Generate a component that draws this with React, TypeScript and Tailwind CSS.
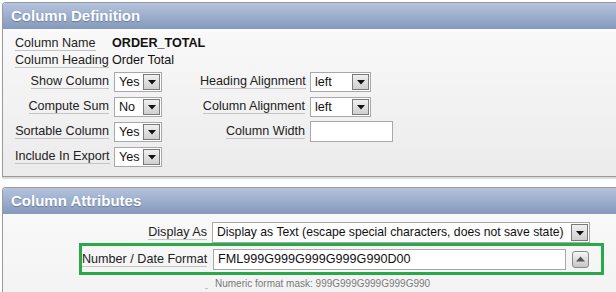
import type { ReactNode } from 'react';

function Label({ children }: { children: ReactNode }) {
    return <span className="border-b border-[#c4c4c4] leading-[15px] text-[#222] whitespace-nowrap">{children}</span>;
}

function Arrow() {
    return (
        <span className="w-[17px] my-[1px] mr-[1px] flex items-center justify-center border border-[#7a7a7a] bg-gradient-to-b from-[#f0f0f0] to-[#cfcfcf]">
            <svg width="8" height="5" viewBox="0 0 8 5" className="mt-[2px]">
                <path d="M0 0 H8 L4 4.5 Z" fill="#111" />
            </svg>
        </span>
    );
}

function Select({ value, width }: { value: string; width: string }) {
    return (
        <div className={`${width} h-[20px] flex items-stretch border border-[#a8a8a8] bg-white`}>
            <span className="flex-1 pl-[4px] leading-[18px] text-[#111] whitespace-nowrap overflow-hidden">{value}</span>
            <Arrow />
        </div>
    );
}

function Header({ title }: { title: string }) {
    return (
        <div className="h-[26px] flex items-center pl-[8px] rounded-tl-[3px] bg-gradient-to-b from-[#b4c3de] to-[#8599bb]">
            <span className="text-[15px] font-bold text-white [text-shadow:0_1px_1px_rgba(60,80,120,0.5)]">{title}</span>
        </div>
    );
}

const defRows = [
    { left: 'Show Column', leftVal: 'Yes', right: 'Heading Alignment', rightVal: 'left' },
    { left: 'Compute Sum', leftVal: 'No', right: 'Column Alignment', rightVal: 'left' },
    { left: 'Sortable Column', leftVal: 'Yes', right: 'Column Width', rightVal: null },
    { left: 'Include In Export', leftVal: 'Yes', right: null, rightVal: null },
];

export default function App() {
    return (
        <div className="w-[616px] h-[292px] overflow-hidden bg-white pt-[2px] text-[12.6px] font-['Liberation_Sans',Arial,sans-serif]">
            {/* Column Definition */}
            <div className="ml-[2px] border-l border-t border-b border-[#9a9a9a] rounded-tl-[4px] shadow-[0_2px_1px_rgba(0,0,0,0.15)]">
                <Header title="Column Definition" />
                <div className="h-[147px] pl-[12px] pt-[6px] bg-gradient-to-b from-[#f9f9f9] to-[#ebebeb]">
                    <div className="h-[17px] flex items-center">
                        <div className="w-[97px] shrink-0"><Label>Column Name</Label></div>
                        <span className="font-bold text-[#111]">ORDER_TOTAL</span>
                    </div>
                    <div className="h-[17px] flex items-center">
                        <div className="w-[97px] shrink-0"><Label>Column Heading</Label></div>
                        <span className="text-[#111]">Order Total</span>
                    </div>
                    {defRows.map((r) => (
                        <div key={r.left} className="h-[25px] grid grid-cols-[99px_86px_110px_auto] items-center">
                            <div className="text-right pr-[5px] whitespace-nowrap"><Label>{r.left}</Label></div>
                            <div><Select value={r.leftVal} width="w-[48px]" /></div>
                            <div className="text-right pr-[5px] whitespace-nowrap">{r.right && <Label>{r.right}</Label>}</div>
                            <div>
                                {r.rightVal && <Select value={r.rightVal} width="w-[61px]" />}
                                {r.right && !r.rightVal && (
                                    <div className="w-[83px] h-[21px] border border-[#a8a8a8] bg-white" />
                                )}
                            </div>
                        </div>
                    ))}
                </div>
            </div>

            {/* Column Attributes */}
            <div className="ml-[2px] mt-[10px] border-l border-t border-[#9a9a9a] rounded-tl-[4px]">
                <Header title="Column Attributes" />
                <div className="pt-[8px] h-[120px] bg-gradient-to-b from-[#f9f9f9] to-[#f0f0f0]">
                    <div className="ml-[76px] h-[21px] flex items-center border-x-[3px] border-transparent">
                        <div className="w-[130px] shrink-0 text-right pr-[5px]"><Label>Display As</Label></div>
                        <div className="w-[378px] h-[21px] flex items-stretch border border-[#a8a8a8] bg-white">
                            <span className="flex-1 pl-[4px] leading-[19px] text-[12.2px] text-[#111] whitespace-nowrap overflow-hidden">
                                Display as Text (escape special characters, does not save state)
                            </span>
                            <Arrow />
                        </div>
                    </div>
                    <div className="ml-[76px] w-[525px] h-[32px] flex items-center border-[3px] border-[#2aa84a]">
                        <div className="w-[130px] shrink-0 text-right pr-[5px]"><Label>Number / Date Format</Label></div>
                        <div className="ml-[1px] w-[353px] h-[21px] border border-[#a8a8a8] bg-white pl-[4px] leading-[19px] text-[#111]">
                            FML999G999G999G999G990D00
                        </div>
                        <div className="ml-[6px] w-[17px] h-[17px] flex items-center justify-center rounded-[3px] border border-[#8a8a8a] bg-gradient-to-b from-[#f6f6f6] to-[#c6c6c6]">
                            <svg width="9" height="6" viewBox="0 0 9 6">
                                <path d="M0 5.5 L4.5 0.5 L9 5.5 Z" fill="#555" />
                            </svg>
                        </div>
                    </div>
                    <div className="ml-[202px] mt-[2px] flex items-end">
                        <span className="w-[3px] h-[1px] bg-[#c4c4c4] mb-[1px]" />
                        <span className="ml-[7px] text-[10px] leading-[13px] text-[#7a7a7a]">
                            Numeric format mask: 999G999G999G999G990
                        </span>
                    </div>
                </div>
            </div>
        </div>
    );
}
